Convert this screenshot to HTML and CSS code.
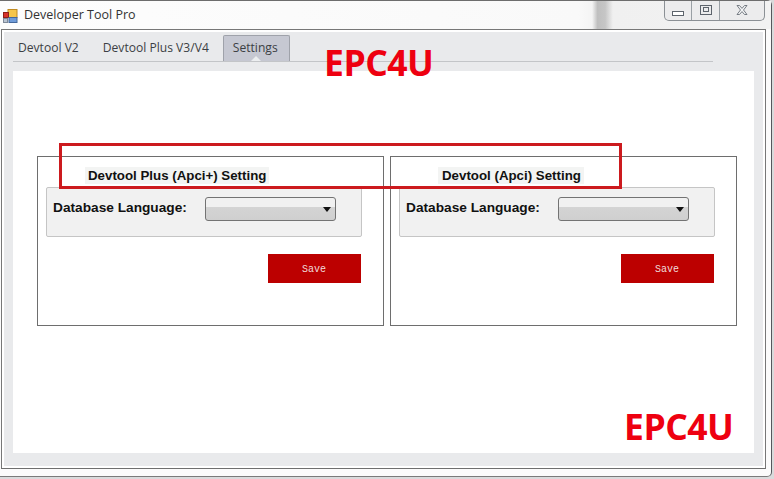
FILE: index.html
```html
<!DOCTYPE html>
<html lang="en">
<head>
<meta charset="utf-8">
<title>Developer Tool Pro</title>
<link rel="stylesheet" href="styles.css">
</head>
<body>
<div class="window">
  <header class="titlebar">
    <svg class="app-icon" width="15" height="14" viewBox="0 0 15 14">
      <rect x="5" y="0.5" width="9" height="8" fill="#f6c64a" stroke="#c08a20"/>
      <rect x="0.5" y="3.5" width="5" height="5" fill="#d8332a" stroke="#8e2018"/>
      <rect x="6" y="8.5" width="8" height="5" fill="#6f9bd8" stroke="#44689c"/>
      <rect x="0.5" y="9.5" width="4" height="4" fill="#b9c4d2" stroke="#7f8a99"/>
    </svg>
    <span class="app-title">Developer Tool Pro</span>
    <div class="caption">
      <div class="cap-btn cap-min"><svg width="12" height="6" viewBox="0 0 12 6"><rect x="0.5" y="0.5" width="11" height="4" fill="#fff" stroke="#5d646c"/></svg></div>
      <div class="cap-btn cap-max"><svg width="12" height="10" viewBox="0 0 12 10"><rect x="0.5" y="0.5" width="11" height="9" fill="none" stroke="#5d646c"/><rect x="3.5" y="2.5" width="5" height="4" fill="none" stroke="#5d646c"/></svg></div>
      <div class="cap-btn cap-close"><svg width="12" height="10" viewBox="0 0 12 10"><path d="M1 .5h2.500L6 3.400 8.500.5H11L7.500 5 11 9.500H8.500L6 6.600 3.500 9.500H1L4.500 5z" fill="#f4f5f6" stroke="#6a7078" stroke-width=".9"/></svg></div>
    </div>
  </header>
  <div class="client">
    <nav class="tabs">
      <span class="tab">Devtool V2</span>
      <span class="tab tab-plus">Devtool Plus V3/V4</span>
      <span class="tab tab-active">Settings</span>
    </nav>
    <main class="panel">
      <section class="group">
        <h2 class="group-title title-plus">Devtool Plus (Apci+) Setting</h2>
        <div class="field-box">
          <label class="field-label">Database Language:</label>
          <div class="combo"><span class="combo-arrow"></span></div>
        </div>
        <div class="actions"><button class="save">Save</button></div>
      </section>
      <section class="group">
        <h2 class="group-title title-apci">Devtool (Apci) Setting</h2>
        <div class="field-box">
          <label class="field-label">Database Language:</label>
          <div class="combo"><span class="combo-arrow"></span></div>
        </div>
        <div class="actions"><button class="save">Save</button></div>
      </section>
    </main>
  </div>
  <div class="mark mark-top">EPC4U</div>
  <div class="mark mark-bottom">EPC4U</div>
  <div class="highlight"></div>
</div>
</body>
</html>
```
FILE: styles.css
```css
* { box-sizing: border-box; }
html, body { margin: 0; padding: 0; }
body {
  width: 774px;
  height: 479px;
  overflow: hidden;
  background: #d9dadb;
  font-family: "Liberation Sans", Arial, sans-serif;
}
.window {
  position: relative;
  width: 772px;
  height: 477px;
  background: #fbfbfb;
  border-top: 1px solid #6d6d6d;
  border-right: 1px solid #55585c;
  border-bottom: 1px solid #7a7a7a;
  border-bottom-right-radius: 5px;
  border-top-right-radius: 5px;
}
.titlebar {
  display: flex;
  align-items: flex-start;
  height: 28px;
  padding: 8px 0 0 3px;
  background: linear-gradient(90deg, #fdfdfd 0, #f9f9f9 75%, #f4f4f4 76.800%, #bfbfbf 77.500%, #c6c6c6 78.500%, #f0f0f0 79.500%, #f2f2f2 100%);
}
.app-icon { flex: none; }
.app-title {
  margin-left: 6px;
  margin-top: -2px;
  font: 12.500px/16px "Open Sans", sans-serif;
  color: #333;
}
.caption {
  display: flex;
  margin-left: auto;
  margin-right: 6px;
  margin-top: -8px;
  height: 20px;
  border: 1px solid #8b9095;
  border-top: 0;
  border-radius: 0 0 5px 5px;
  background: #ececed;
}
.cap-btn {
  display: flex;
  align-items: center;
  justify-content: center;
  height: 19px;
}
.cap-min { width: 27px; border-right: 1px solid #9aa0a5; padding-top: 7px; }
.cap-max { width: 28px; border-right: 1px solid #9aa0a5; padding-bottom: 1px; }
.cap-close { width: 44px; padding-bottom: 1px; }
.client {
  width: 765px;
  height: 440px;
  margin-left: 1px;
  padding: 3px 10px 15px 11px;
  background: #e9eaec;
  border: 1px solid #777;
  border-bottom-color: #6f6f6f;
  box-shadow: inset 0 0 0 2px #fff;
}
.tabs {
  display: flex;
  align-items: flex-end;
  height: 29px;
  margin-right: 42px;
  padding-left: 5px;
  border-bottom: 1px solid #c3c5c8;
}
.tab {
  height: 25px;
  font: 12.100px/23px "Open Sans", sans-serif;
  color: #3c3f44;
  white-space: nowrap;
}
.tab-plus { margin-left: 24px; }
.tab-active {
  position: relative;
  margin-left: 14px;
  padding: 0 9px 0 9px;
  width: 67px;
  height: 26px;
  line-height: 24px;
  background: #c6c8d2;
  border: 1px solid #9fa2aa;
  border-bottom: 0;
  border-radius: 2px 2px 0 0;
}
.tab-active::after {
  content: "";
  position: absolute;
  left: 50%;
  bottom: 0;
  margin-left: -5px;
  border: 5px solid transparent;
  border-top: 0;
  border-bottom-color: #eceef0;
}
.panel {
  display: flex;
  gap: 6px;
  width: 741px;
  height: 382px;
  margin-top: 9px;
  padding: 85px 0 0 24px;
  background: #fff;
}
.group {
  position: relative;
  width: 347px;
  height: 170px;
  padding: 10px 21px 0 8px;
  border: 1px solid #6e6e6e;
}
.group-title {
  width: fit-content;
  height: 17px;
  margin: 0;
  padding: 0 3px;
  background: #f3f4f3;
  font: bold 13.300px/18px "Liberation Sans", Arial, sans-serif;
  color: #111;
  white-space: nowrap;
}
.title-plus { margin-left: 39px; }
.title-apci { margin-left: 39px; padding: 0 3px 0 4px; }
.field-box {
  display: flex;
  width: 316px;
  height: 50px;
  margin-top: 3px;
  padding: 9px 0 0 6px;
  background: #f1f1f1;
  border: 1px solid #c5c5c5;
  border-radius: 2px;
}
.field-label {
  width: 152px;
  font: bold 13.700px/22px "Liberation Sans", Arial, sans-serif;
  color: #111;
  white-space: nowrap;
}
.combo {
  position: relative;
  width: 131px;
  height: 24px;
  background: linear-gradient(#f1f1f1 0, #f1f1f1 40%, #d4d4d4 42%, #cfcfcf 100%);
  border: 1px solid #737373;
  border-radius: 3px;
}
.combo-arrow {
  position: absolute;
  right: 4px;
  top: 9px;
  border: 4px solid transparent;
  border-bottom: 0;
  border-top: 5px solid #111;
}
.actions {
  display: flex;
  justify-content: flex-end;
  margin-top: 17px;
  margin-left: 222px;
  width: 93px;
}
.save {
  width: 93px;
  height: 29px;
  padding: 2px 1px 0 0;
  background: #bc0000;
  border: 0;
  color: #f0dcdc;
  font: 10px/12px "Liberation Mono", monospace;
}
.mark {
  position: absolute;
  color: #ee0010;
  font: bold 35.500px/40px "Open Sans", sans-serif;
  letter-spacing: -0.5px;
}
.mark-top { left: 324px; top: 41px; }
.mark-bottom { left: 624px; top: 405px; }
.highlight {
  position: absolute;
  left: 59px;
  top: 142px;
  width: 563px;
  height: 46px;
  border: 3px solid #cc1a1e;
}
```
